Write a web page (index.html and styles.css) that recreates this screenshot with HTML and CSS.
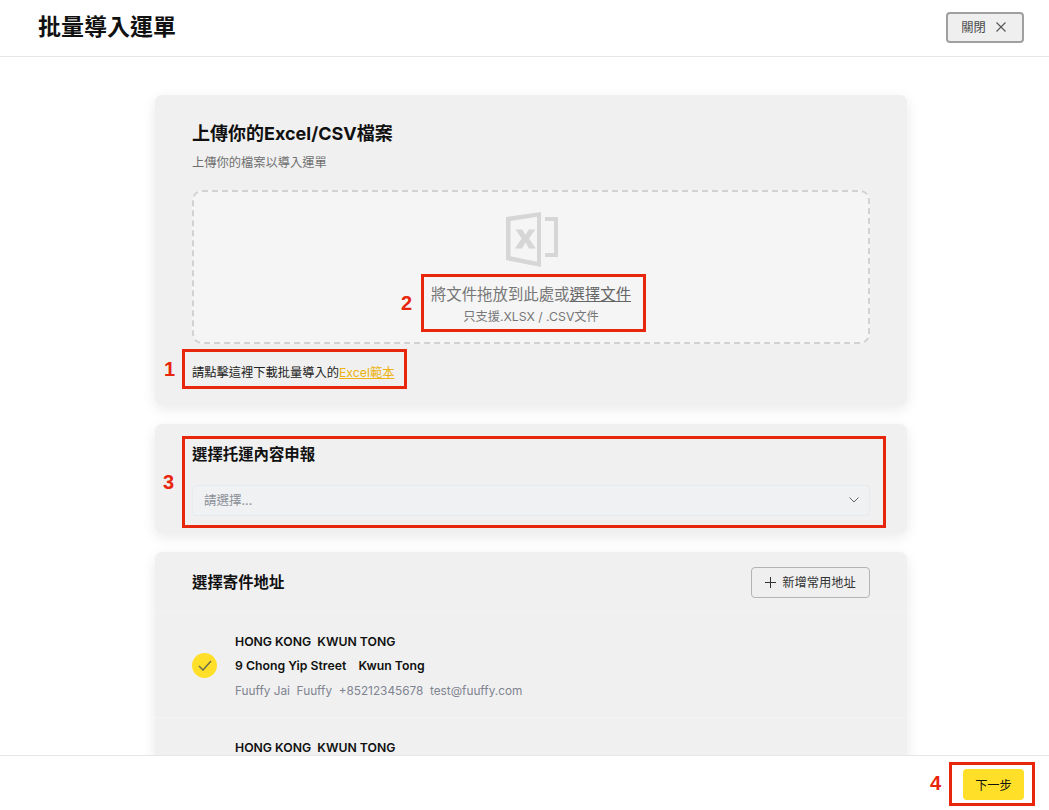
FILE: index.html
```html
<!DOCTYPE html>
<html lang="zh-Hant">
<head>
<meta charset="utf-8">
<title>批量導入運單</title>
<link rel="stylesheet" href="styles.css">
</head>
<body>
<div class="app">
  <header class="topbar">
    <h1 class="page-title">批量導入運單</h1>
    <button class="close-btn" type="button">關閉
      <svg class="close-icon" viewBox="0 0 12 12" aria-hidden="true"><path d="M1.500 1.500l9 9M10.500 1.500l-9 9"/></svg>
    </button>
  </header>
  <main class="content">
    <section class="card upload-card">
      <h2 class="upload-title">上傳你的Excel/CSV檔案</h2>
      <p class="upload-sub">上傳你的檔案以導入運單</p>
      <div class="dropzone">
        <svg class="xls-icon" viewBox="0 0 52 56" aria-hidden="true">
          <path class="xls-door" fill-rule="evenodd" d="M0 5L35 0V55L0 48ZM4.500 9V44.300L31 49.700V4.800Z"/>
          <path class="xls-door" d="M9.500 17.500h6.800l3.200 5.500 3.300-5.500h6.500l-6.300 9 6.800 10h-6.900l-3.400-6-3.500 6H9l6.600-10z"/>
          <path class="xls-bracket" d="M39 7H50V43H39"/>
        </svg>
        <p class="drop-main">將文件拖放到此處或<a class="drop-link" href="#">選擇文件</a></p>
        <p class="drop-hint">只支援.XLSX / .CSV文件</p>
      </div>
      <p class="template-line">請點擊這裡下載批量導入的<a class="template-link" href="#">Excel範本</a></p>
    </section>

    <section class="card declare-card">
      <h2 class="section-title">選擇托運內容申報</h2>
      <div class="select-box">
        <span class="select-placeholder">請選擇...</span>
        <svg class="chevron" viewBox="0 0 10 6" aria-hidden="true"><path d="M.5.500 5 5 9.500.500"/></svg>
      </div>
    </section>

    <section class="card address-card">
      <div class="address-head">
        <h2 class="section-title address-title">選擇寄件地址</h2>
        <button class="add-btn" type="button">
          <svg class="plus-icon" viewBox="0 0 11 11" aria-hidden="true"><path d="M5.500 0v11M0 5.500h11"/></svg>
          新增常用地址
        </button>
      </div>
      <div class="address-row">
        <span class="check">
          <svg class="check-icon" viewBox="0 0 14 11" aria-hidden="true"><path d="M1 6l4 4 8-9"/></svg>
        </span>
        <div class="address-text">
          <p class="addr-strong">HONG KONG&nbsp; KWUN TONG</p>
          <p class="addr-strong">9 Chong Yip Street &nbsp;&nbsp; Kwun Tong</p>
          <p class="addr-muted">Fuuffy Jai&nbsp; Fuuffy&nbsp; +85212345678&nbsp; test@fuuffy.com</p>
        </div>
      </div>
      <div class="address-row address-row-next">
        <span class="check-spacer"></span>
        <div class="address-text">
          <p class="addr-strong">HONG KONG&nbsp; KWUN TONG</p>
        </div>
      </div>
    </section>
  </main>
  <footer class="footer">
    <button class="next-btn" type="button">下一步</button>
  </footer>

  <div class="mark mark-1"></div><span class="mark-num num-1">1</span>
  <div class="mark mark-2"></div><span class="mark-num num-2">2</span>
  <div class="mark mark-3"></div><span class="mark-num num-3">3</span>
  <div class="mark mark-4"></div><span class="mark-num num-4">4</span>
</div>
</body>
</html>
```

FILE: styles.css
```css
* { box-sizing: border-box; }
html, body { margin: 0; height: 100%; }
body {
  font-family: Inter, "Noto Sans CJK TC", "Liberation Sans", sans-serif;
  color: #111;
  background: #fff;
}
h1, h2, p { margin: 0; }
a { color: inherit; }
button { font-family: inherit; cursor: pointer; }

.app {
  position: relative;
  width: 1049px;
  height: 810px;
  display: flex;
  flex-direction: column;
  overflow: hidden;
}

.topbar {
  flex: 0 0 57px;
  display: flex;
  align-items: center;
  justify-content: space-between;
  padding: 0 25px 2px 38px;
  border-bottom: 1px solid #e6e6e6;
}
.page-title { font-size: 23px; line-height: 30px; font-weight: 700; }
.close-btn {
  width: 78px;
  height: 31px;
  display: flex;
  align-items: center;
  justify-content: center;
  gap: 9px;
  padding: 0 2px 0 0;
  font-size: 12.250px;
  color: #4a4a4a;
  background: #efefef;
  border: 2px solid #a0a0a0;
  border-radius: 4px;
}
.close-icon { width: 12px; height: 12px; fill: none; stroke: #555; stroke-width: 1.100; }

.content {
  flex: 1;
  min-height: 0;
  overflow: hidden;
  display: flex;
  flex-direction: column;
  align-items: center;
  gap: 19px;
  padding: 38px 0 0 13px;
}
.card {
  flex: none;
  width: 752px;
  background: #f0f0f0;
  border-radius: 7px;
  box-shadow: 0 4px 14px rgba(0, 0, 0, .09);
}

.upload-card { height: 310px; padding: 26px 37px 0; }
.upload-title { font-size: 18px; line-height: 25px; font-weight: 700; }
.upload-sub { margin-top: 8px; font-size: 12.250px; line-height: 18px; color: #6f6f6f; }
.dropzone {
  margin-top: 18px;
  height: 154px;
  display: flex;
  flex-direction: column;
  align-items: center;
  padding-top: 20px;
  background: #f5f5f5;
  border: 2px dashed #d2d2d2;
  border-radius: 10px;
}
.xls-icon { width: 52px; height: 56px; margin-left: 1px; }
.xls-door { fill: #d6d6d6; }
.xls-bracket { fill: none; stroke: #d6d6d6; stroke-width: 4; }
.drop-main { margin-top: 16px; font-size: 15.400px; line-height: 22px; color: #777; }
.drop-link { color: #666; }
.drop-hint { margin-top: 2px; font-size: 12.250px; line-height: 18px; color: #777; }
.template-line { margin-top: 19px; font-size: 12.250px; line-height: 20px; color: #222; }
.template-link { color: #edb20f; }

.declare-card { height: 109px; padding: 19px 37px 0; }
.section-title { font-size: 15.400px; line-height: 23px; font-weight: 700; }
.select-box {
  margin-top: 19px;
  height: 31px;
  display: flex;
  align-items: center;
  justify-content: space-between;
  padding: 0 10px 2px 11px;
  background: #f0f1f2;
  border: 1px solid #e7eaee;
  border-radius: 4px;
}
.select-placeholder { font-size: 12.500px; color: #8a8f99; }
.chevron { width: 10px; height: 6px; fill: none; stroke: #666; stroke-width: 1; }

.address-card { height: 300px; }
.address-head {
  height: 61px;
  display: flex;
  align-items: center;
  justify-content: space-between;
  padding: 0 37px;
  border-bottom: 1px solid #f3f3f3;
}
.address-title { font-weight: 600; }
.add-btn {
  width: 119px;
  height: 31px;
  display: flex;
  align-items: center;
  justify-content: center;
  gap: 6px;
  padding: 0;
  font-size: 12.250px;
  color: #333;
  background: #efefef;
  border: 1px solid #b4b4b4;
  border-radius: 4px;
}
.plus-icon { width: 11px; height: 11px; fill: none; stroke: #333; stroke-width: 1; }
.address-row {
  height: 105px;
  display: flex;
  align-items: center;
  gap: 18px;
  padding: 0 37px;
  border-bottom: 1px solid #f5f5f5;
}
.address-row-next { align-items: flex-start; padding-top: 21px; }
.check, .check-spacer { flex: 0 0 25px; height: 25px; }
.check {
  display: flex;
  align-items: center;
  justify-content: center;
  border-radius: 50%;
  background: #ffdf27;
}
.check-icon { width: 14px; height: 11px; fill: none; stroke: #6b6b55; stroke-width: 1.500; }
.address-text { display: flex; flex-direction: column; gap: 6px; padding-top: 3px; }
.address-row-next .address-text { padding-top: 0; }
.addr-strong { font-size: 12.250px; line-height: 18.500px; font-weight: 600; color: #111; }
.addr-muted { font-size: 11.800px; line-height: 18.500px; color: #7f8490; }

.footer {
  flex: 0 0 55px;
  display: flex;
  align-items: center;
  justify-content: flex-end;
  padding: 3px 25px 0 0;
  border-top: 1px solid #e6e6e6;
  background: #fff;
}
.next-btn {
  width: 61px;
  height: 31px;
  padding: 0;
  font-size: 12.250px;
  color: #111;
  background: #ffdf27;
  border: 0;
  border-radius: 4px;
}

/* tutorial annotations lying over the page */
.mark { position: absolute; border: 3px solid #e8260c; }
.mark-1 { left: 182px; top: 349px; width: 225px; height: 40px; }
.mark-2 { left: 421px; top: 274px; width: 225px; height: 58px; }
.mark-3 { left: 182px; top: 436px; width: 704px; height: 92px; }
.mark-4 { left: 949px; top: 762px; width: 86px; height: 44px; }
.mark-num {
  position: absolute;
  font-family: "Liberation Sans", Arial, sans-serif;
  font-size: 20px;
  line-height: 24px;
  font-weight: 700;
  color: #e8260c;
}
.num-1 { left: 164px; top: 357px; }
.num-2 { left: 401px; top: 291px; }
.num-3 { left: 163px; top: 470px; }
.num-4 { left: 930px; top: 771px; }
```
